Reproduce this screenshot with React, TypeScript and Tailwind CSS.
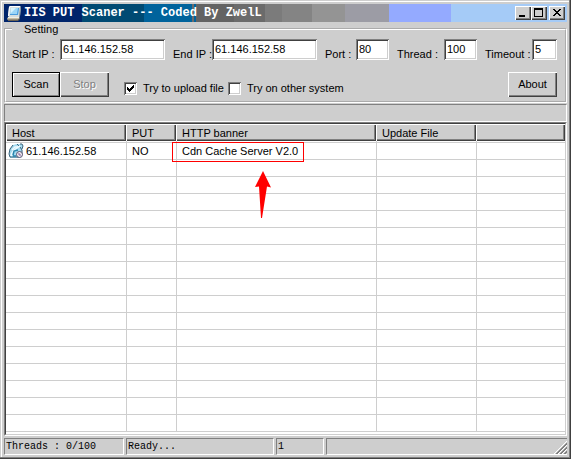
import type { ReactNode } from "react";

const sunken =
  "bg-white shadow-[inset_1px_1px_#808080,inset_-1px_-1px_#fff,inset_2px_2px_#404040,inset_-2px_-2px_#cecece]";
const raised =
  "bg-[#cecece] shadow-[inset_1px_1px_#fff,inset_-1px_-1px_#404040,inset_-2px_-2px_#808080]";
const statusPanel =
  "h-[17px] shrink-0 whitespace-pre border border-t-[#808080] border-l-[#808080] border-r-white border-b-white pl-px leading-[15px]";

const titleColors =
  "bg-[linear-gradient(to_right,#00246b_78px,#004a73_78px_140px,#00639c_140px_188px,#6b6b6b_188px_190px,#00639c_190px_192px,#636363_192px_230px,#6b6b6b_230px_261px,#7b7b7b_261px_278px,#848484_278px_308px,#949494_308px_341px,#9c9ca5_341px_385px,#94aaff_385px_447px,#a5cbf7_447px)]";

function Field({ id, label, value, labelWidth, inputWidth }: {
  id: string;
  label: string;
  value: string;
  labelWidth: string;
  inputWidth: string;
}) {
  return (
    <div className="flex">
      <label htmlFor={id} className={`${labelWidth} whitespace-nowrap pt-2 leading-[14px]`}>
        {label}
      </label>
      <input id={id} defaultValue={value} className={`${inputWidth} ${sunken} h-[21px] px-[3px] pb-px outline-none`} />
    </div>
  );
}

function Check({ id, label, checked }: { id: string; label: string; checked?: boolean }) {
  return (
    <div className="flex items-center gap-1.5 pb-0.5">
      <span className="relative block size-[13px]">
        <input id={id} type="checkbox" defaultChecked={checked} className={`peer block size-[13px] appearance-none ${sunken}`} />
        <svg viewBox="0 0 13 13" shapeRendering="crispEdges" className="pointer-events-none absolute inset-0 hidden size-[13px] peer-checked:block">
          <path d="M3 5h1v1h1v1h1v-1h1v-1h1v-1h1v-1h1v3h-1v1h-1v1h-1v1h-1v1h-1v-1h-1v-1h-1z" fill="#000" />
        </svg>
      </span>
      <label htmlFor={id} className="whitespace-nowrap leading-[13px]">{label}</label>
    </div>
  );
}

function CaptionButton({ label, children }: { label: string; children: ReactNode }) {
  return (
    <button aria-label={label} className={`h-[14px] w-4 ${raised}`}>
      <svg viewBox="0 0 16 14" shapeRendering="crispEdges" className="block h-[14px] w-4">{children}</svg>
    </button>
  );
}

function ComputerIcon() {
  return (
    <svg viewBox="0 0 16 16" className="size-4 shrink-0">
      <path d="M4 1h10l1 1-1 9-1 1H3L2 11 3 2z" fill="#d6dede" />
      <path d="M4 1h10v1H4L3 11H2L3 2z" fill="#fff" />
      <path d="M14 2h1l-1 9-1 1z" fill="#7b8c94" />
      <path d="M5 3h8l-1 7H4z" fill="#9cd6f7" />
      <path d="M5 3h5L5 8z" fill="#d6f3ff" />
      <path d="M12 3h1l-1 7H4V9h7z" fill="#4a9cde" />
      <path d="M2 12h11l1 1-2 2H2l-1-1z" fill="#c6bda5" />
      <path d="M2 12h11v1H2z" fill="#efefe7" />
      <path d="M2 14.500h10l2-1.500v1l-2 2H2z" fill="#6b6352" />
    </svg>
  );
}

function HostIcon() {
  return (
    <svg viewBox="0 0 16 16" className="size-4 shrink-0">
      <path d="M2 6 5 2l4-1 5 0 1 2-1 3 0 8-3 1H2L1 12z" fill="#a5dbf0" />
      <path d="M5 2 2 6 1 11l1 3h9M9 1l3 3 2 3v5M12 1h2l1 2-1 3" fill="none" stroke="#3a637b" />
      <path d="M4 7 7 4h3" fill="none" stroke="#f0fbff" strokeWidth="1.5" />
      <path d="M3 13C4 8 8 5 12 3" fill="none" stroke="#f0fbff" strokeWidth="1.5" />
      <path d="M5 12 6 8 10 7M5 13h3" fill="none" stroke="#2884ad" strokeWidth="1.5" />
      <circle cx="11.5" cy="11.5" r="3" fill="#eee" stroke="#5a5273" />
      <path d="M11 10v2h2" fill="none" stroke="#845aa5" />
    </svg>
  );
}

function Annotation() {
  return (
    <>
      <div className="pointer-events-none absolute -top-px -left-[5px] h-5 w-[132px] border border-[#f00]" />
      <svg viewBox="0 0 16 48" className="pointer-events-none absolute top-7 left-[78px] h-12 w-4">
        <path d="M8 0 16 16.500 12 15.500 7 47H6L4 15.500 0 16Z" fill="#f00" />
      </svg>
    </>
  );
}

const headers = ["Host", "PUT", "HTTP banner", "Update File", ""];
const emptyRows = Array.from({ length: 16 }, (_, i) => i);
const cell = "h-[17px] border-b border-[#cecece] p-0 pl-[5px] not-first:border-l";

export default function App() {
  return (
    <main className="w-full bg-[#cecece] p-1 font-['Liberation_Sans',Arial,sans-serif] text-[11px] text-black shadow-[inset_-1px_-1px_#404040,inset_-2px_-2px_#808080,inset_1px_1px_#cecece,inset_2px_2px_#fff]">
      <header className={`flex h-[18px] items-center pr-0.5 pl-0.5 ${titleColors}`}>
        <ComputerIcon />
        <h1 className="grow pl-0.5 font-['Liberation_Mono',monospace] text-[12px] leading-4 font-bold whitespace-pre text-white">
          IIS PUT Scaner --- Coded By ZwelL
        </h1>
        <CaptionButton label="Minimize">
          <path d="M4 9h6v2H4z" />
        </CaptionButton>
        <CaptionButton label="Maximize">
          <path d="M3 2h9v9H3zM4 4v6h7V4z" fillRule="evenodd" />
        </CaptionButton>
        <div className="ml-0.5 flex">
          <CaptionButton label="Close">
            <path d="M4 3h2v1h1v1h2V4h1V3h2v1h-1v1h-1v1H9v1h1v1h1v1h1v1h-2V9H9V8H7v1H6v1H4V9h1V8h1V7h1V6H6V5H5V4H4z" />
          </CaptionButton>
        </div>
      </header>

      <fieldset className="border-2 border-white px-1.5 pb-1 [border-style:groove]">
        <legend className="px-3 leading-[14px]">Setting</legend>
        <div className="flex gap-2 pt-[3px]">
          <Field id="start" label="Start IP :" value="61.146.152.58" labelWidth="w-12" inputWidth="w-[105px]" />
          <Field id="end" label="End IP :" value="61.146.152.58" labelWidth="w-[39px]" inputWidth="w-[105px]" />
          <Field id="port" label="Port :" value="80" labelWidth="w-[31px]" inputWidth="w-[33px]" />
          <Field id="thread" label="Thread :" value="100" labelWidth="w-[47px]" inputWidth="w-[33px]" />
          <Field id="timeout" label="Timeout :" value="5" labelWidth="w-[47px]" inputWidth="w-[25px]" />
        </div>
        <div className="flex items-end pt-[11px] pr-0.5">
          <button className="h-[25px] w-12 border border-black bg-[#cecece] pb-px shadow-[inset_1px_1px_#fff,inset_-1px_-1px_#808080]">
            Scan
          </button>
          <button disabled className={`h-[25px] w-[49px] pb-px text-[#808080] [text-shadow:1px_1px_#fff] ${raised}`}>
            Stop
          </button>
          <div className="flex grow gap-1 pl-[15px]">
            <Check id="upload" label="Try to upload file" checked />
            <Check id="other" label="Try on other system" />
          </div>
          <button className={`h-[25px] w-[49px] pb-px ${raised}`}>About</button>
        </div>
      </fieldset>

      <div className="mt-px h-[18px] border border-t-[#808080] border-l-[#808080] border-r-white border-b-white" />

      <section className="border border-t-[#808080] border-l-[#808080] border-r-white border-b-white bg-white">
        <div className="border border-t-[#404040] border-l-[#404040] border-r-[#cecece] border-b-[#cecece] pb-0.5">
          <table className="w-full table-fixed border-separate border-spacing-0 leading-4">
            <colgroup>
              <col className="w-[120px]" />
              <col className="w-[50px]" />
              <col className="w-[200px]" />
              <col className="w-[100px]" />
              <col />
            </colgroup>
            <thead>
              <tr>
                {headers.map((h, i) => (
                  <th key={i} className={`h-[17px] p-0 pl-1.5 text-left font-normal ${raised}`}>{h}</th>
                ))}
              </tr>
            </thead>
            <tbody>
              <tr className="leading-none">
                {headers.map((_, i) => (
                  <td key={i} className="h-0.5 border-b border-[#cecece] p-0 not-first:border-l" />
                ))}
              </tr>
              <tr>
                <td className="h-[17px] border-b border-[#cecece] p-0 pl-0.5">
                  <div className="flex gap-0.5">
                    <HostIcon />
                    61.146.152.58
                  </div>
                </td>
                <td className={cell}>NO</td>
                <td className={`relative ${cell}`}>
                  Cdn Cache Server V2.0
                  <Annotation />
                </td>
                <td className={cell} />
                <td className={cell} />
              </tr>
              {emptyRows.map((r) => (
                <tr key={r}>
                  {headers.map((_, i) => (
                    <td key={i} className={cell} />
                  ))}
                </tr>
              ))}
            </tbody>
          </table>
        </div>
      </section>

      <footer className="flex gap-0.5 pt-0.5 font-['Liberation_Mono',monospace] text-[10px]">
        <div className={`w-[120px] ${statusPanel}`}>Threads : 0/100</div>
        <div className={`w-[148px] ${statusPanel}`}>Ready...</div>
        <div className={`w-12 ${statusPanel}`}>1</div>
        <div className="flex h-[17px] grow items-end justify-end border border-r-0 border-t-[#808080] border-b-white border-l-[#808080]">
          <svg viewBox="0 0 13 13" className="size-[13px]">
            <path d="M0 13 13 0M4 13l9-9M8 13l5-5" stroke="#fff" />
            <path d="M2 13 13 2M3 13 13 3M6 13l7-7M7 13l6-6M10 13l3-3M11 13l2-2" stroke="#808080" />
          </svg>
        </div>
      </footer>
    </main>
  );
}
